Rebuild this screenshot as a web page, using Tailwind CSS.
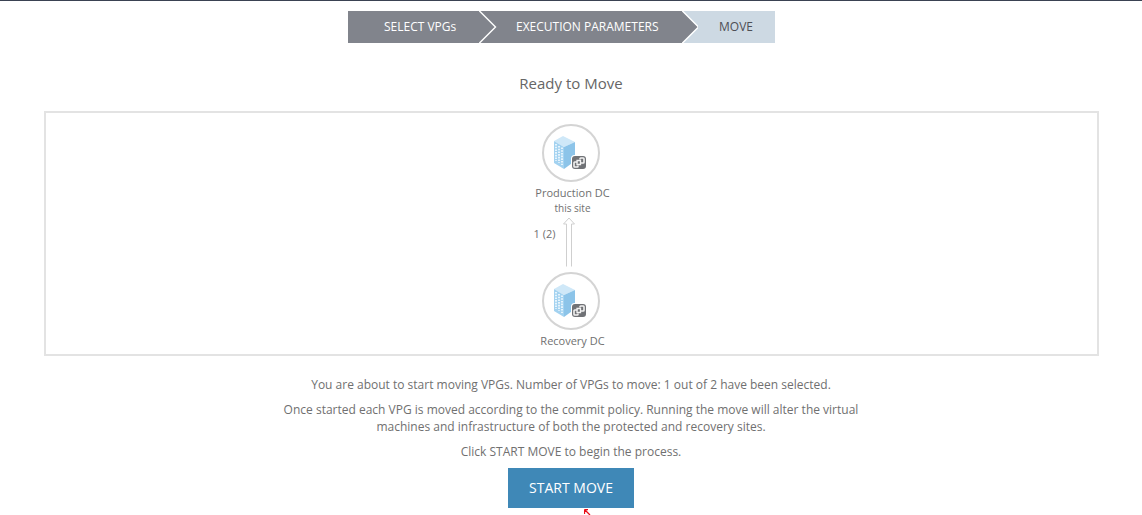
<!DOCTYPE html>
<html lang="en">
  <head>
    <meta charset="UTF-8" />
    <title>Move VPGs</title>
    <script src="https://cdn.jsdelivr.net/npm/@tailwindcss/browser@4"></script>
  </head>

  <body class="relative h-[515px] overflow-hidden bg-white font-['Open_Sans',sans-serif] text-[#707070]">
    <div class="h-px bg-[#3a4252]"></div>

    <!-- steps -->
    <div class="mt-[10px] ml-[348px] flex h-8 w-[427px] text-xs">
      <div class="flex w-[131px] items-center bg-[#81848c] pl-[36px] font-medium text-white">SELECT VPGs</div>
      <svg class="h-8 w-[18px] shrink-0" viewBox="0 0 18 32">
        <rect width="18" height="32" fill="#81848c" />
        <path d="M0 -0.5 L16.5 16 L0 32.5" fill="none" stroke="#fff" stroke-width="1.4" />
      </svg>
      <div class="flex w-[185px] items-center bg-[#81848c] pl-[19px] font-medium text-white">EXECUTION PARAMETERS</div>
      <svg class="h-8 w-[16px] shrink-0" viewBox="0 0 16 32">
        <rect width="16" height="32" fill="#cdd9e3" />
        <path d="M0 0 L16 16 L0 32 Z" fill="#81848c" />
        <path d="M0 -0.5 L16.5 16 L0 32.5" fill="none" stroke="#fff" stroke-width="1.4" />
      </svg>
      <div class="flex flex-1 items-center bg-[#cdd9e3] pl-[21px] text-[#4d4f55]">MOVE</div>
    </div>

    <h1 class="mt-[29px] text-center text-[15px] leading-[22px] text-[#666]">Ready to Move</h1>

    <!-- sites diagram -->
    <div class="mx-[44px] mt-[17px] flex h-[245px] w-[1055px] flex-col items-center border-2 border-[#e3e3e3] pt-[11px] text-[11px]">
      <div class="mr-[2px] flex h-[58px] w-[58px] items-center justify-center rounded-full border-2 border-[#d4d4d4]">
        <svg class="h-[38px] w-[36px]" viewBox="0 0 36 38">
          <path d="M1 7 L10 2 L22 8 L11 13 Z" fill="#cfe8f8" />
          <path d="M1 7 L11 13 V35 L1 29 Z" fill="#a3d2f0" />
          <path d="M11 13 L22 8 V27 L11 35 Z" fill="#8cc4e9" />
          <path d="M3 10 V27 M6 12 V29 M9 13.5 V31" fill="none" stroke="#eef8fe" stroke-width="1.8" stroke-dasharray="1.6 1.1" />
          <rect x="18" y="21" width="16" height="15" rx="3.5" fill="#fff" />
          <rect x="19" y="22" width="14" height="13" rx="3" fill="#707276" />
          <path d="M27 25.5 V24.8 Q27 24 27.8 24 H30.2 Q31 24 31 24.8 V28.2 Q31 29 30.2 29 H27.5 M25 31.5 V32.2 Q25 33 24.2 33 H21.8 Q21 33 21 32.2 V28.8 Q21 28 21.8 28 H24.5" fill="none" stroke="#f2f2f2" stroke-width="1.6" />
          <path d="M24 26.5 H27.5 V30.5 H24 Z" fill="none" stroke="#f2f2f2" stroke-width="1.3" />
        </svg>
      </div>
      <div class="mt-[2px] ml-[2px] leading-[18px]">Production DC</div>
      <div class="ml-[2px] text-[10px] leading-[13px]">this site</div>
      <div class="relative mt-[2px] h-[50px] w-[58px]">
        <span class="absolute top-[9px] left-[-9px] leading-[16px]">1 (2)</span>
        <svg class="absolute top-0 left-[20px] h-[50px] w-[12px]" viewBox="0 0 12 50">
          <path d="M3.5 49.5 V7 H0.5 L6 1 L11.5 7 H8.5 V49.5" fill="none" stroke="#cfcfcf" stroke-width="1" />
        </svg>
      </div>
      <div class="mt-[5px] mr-[2px] flex h-[58px] w-[58px] items-center justify-center rounded-full border-2 border-[#d4d4d4]">
        <svg class="h-[38px] w-[36px]" viewBox="0 0 36 38">
          <path d="M1 7 L10 2 L22 8 L11 13 Z" fill="#cfe8f8" />
          <path d="M1 7 L11 13 V35 L1 29 Z" fill="#a3d2f0" />
          <path d="M11 13 L22 8 V27 L11 35 Z" fill="#8cc4e9" />
          <path d="M3 10 V27 M6 12 V29 M9 13.5 V31" fill="none" stroke="#eef8fe" stroke-width="1.8" stroke-dasharray="1.6 1.1" />
          <rect x="18" y="21" width="16" height="15" rx="3.5" fill="#fff" />
          <rect x="19" y="22" width="14" height="13" rx="3" fill="#707276" />
          <path d="M27 25.5 V24.8 Q27 24 27.8 24 H30.2 Q31 24 31 24.8 V28.2 Q31 29 30.2 29 H27.5 M25 31.5 V32.2 Q25 33 24.2 33 H21.8 Q21 33 21 32.2 V28.8 Q21 28 21.8 28 H24.5" fill="none" stroke="#f2f2f2" stroke-width="1.6" />
          <path d="M24 26.5 H27.5 V30.5 H24 Z" fill="none" stroke="#f2f2f2" stroke-width="1.3" />
        </svg>
      </div>
      <div class="mt-[2px] ml-[2px] leading-[18px]">Recovery DC</div>
    </div>

    <!-- summary -->
    <div class="mx-auto mt-[20px] w-[590px] text-center text-xs leading-[17px]">
      <p>You are about to start moving VPGs. Number of VPGs to move: 1 out of 2 have been selected.</p>
      <p class="mt-2">Once started each VPG is moved according to the commit policy. Running the move will alter the virtual machines and infrastructure of both the protected and recovery sites.</p>
      <p class="mt-2">Click START MOVE to begin the process.</p>
    </div>

    <button class="mt-[8px] ml-[508px] h-10 w-[126px] bg-[#3f88b7] text-sm font-medium text-white">START MOVE</button>

    <!-- mouse pointer left in the shot -->
    <svg class="absolute top-[509px] left-[584px] h-[6px] w-[8px]" viewBox="0 0 8 6">
      <path d="M0.5 0.5 V5 M0.5 0.5 H4 M1 1 L6 6" fill="none" stroke="#e8101a" stroke-width="1.3" />
    </svg>
  </body>
</html>
